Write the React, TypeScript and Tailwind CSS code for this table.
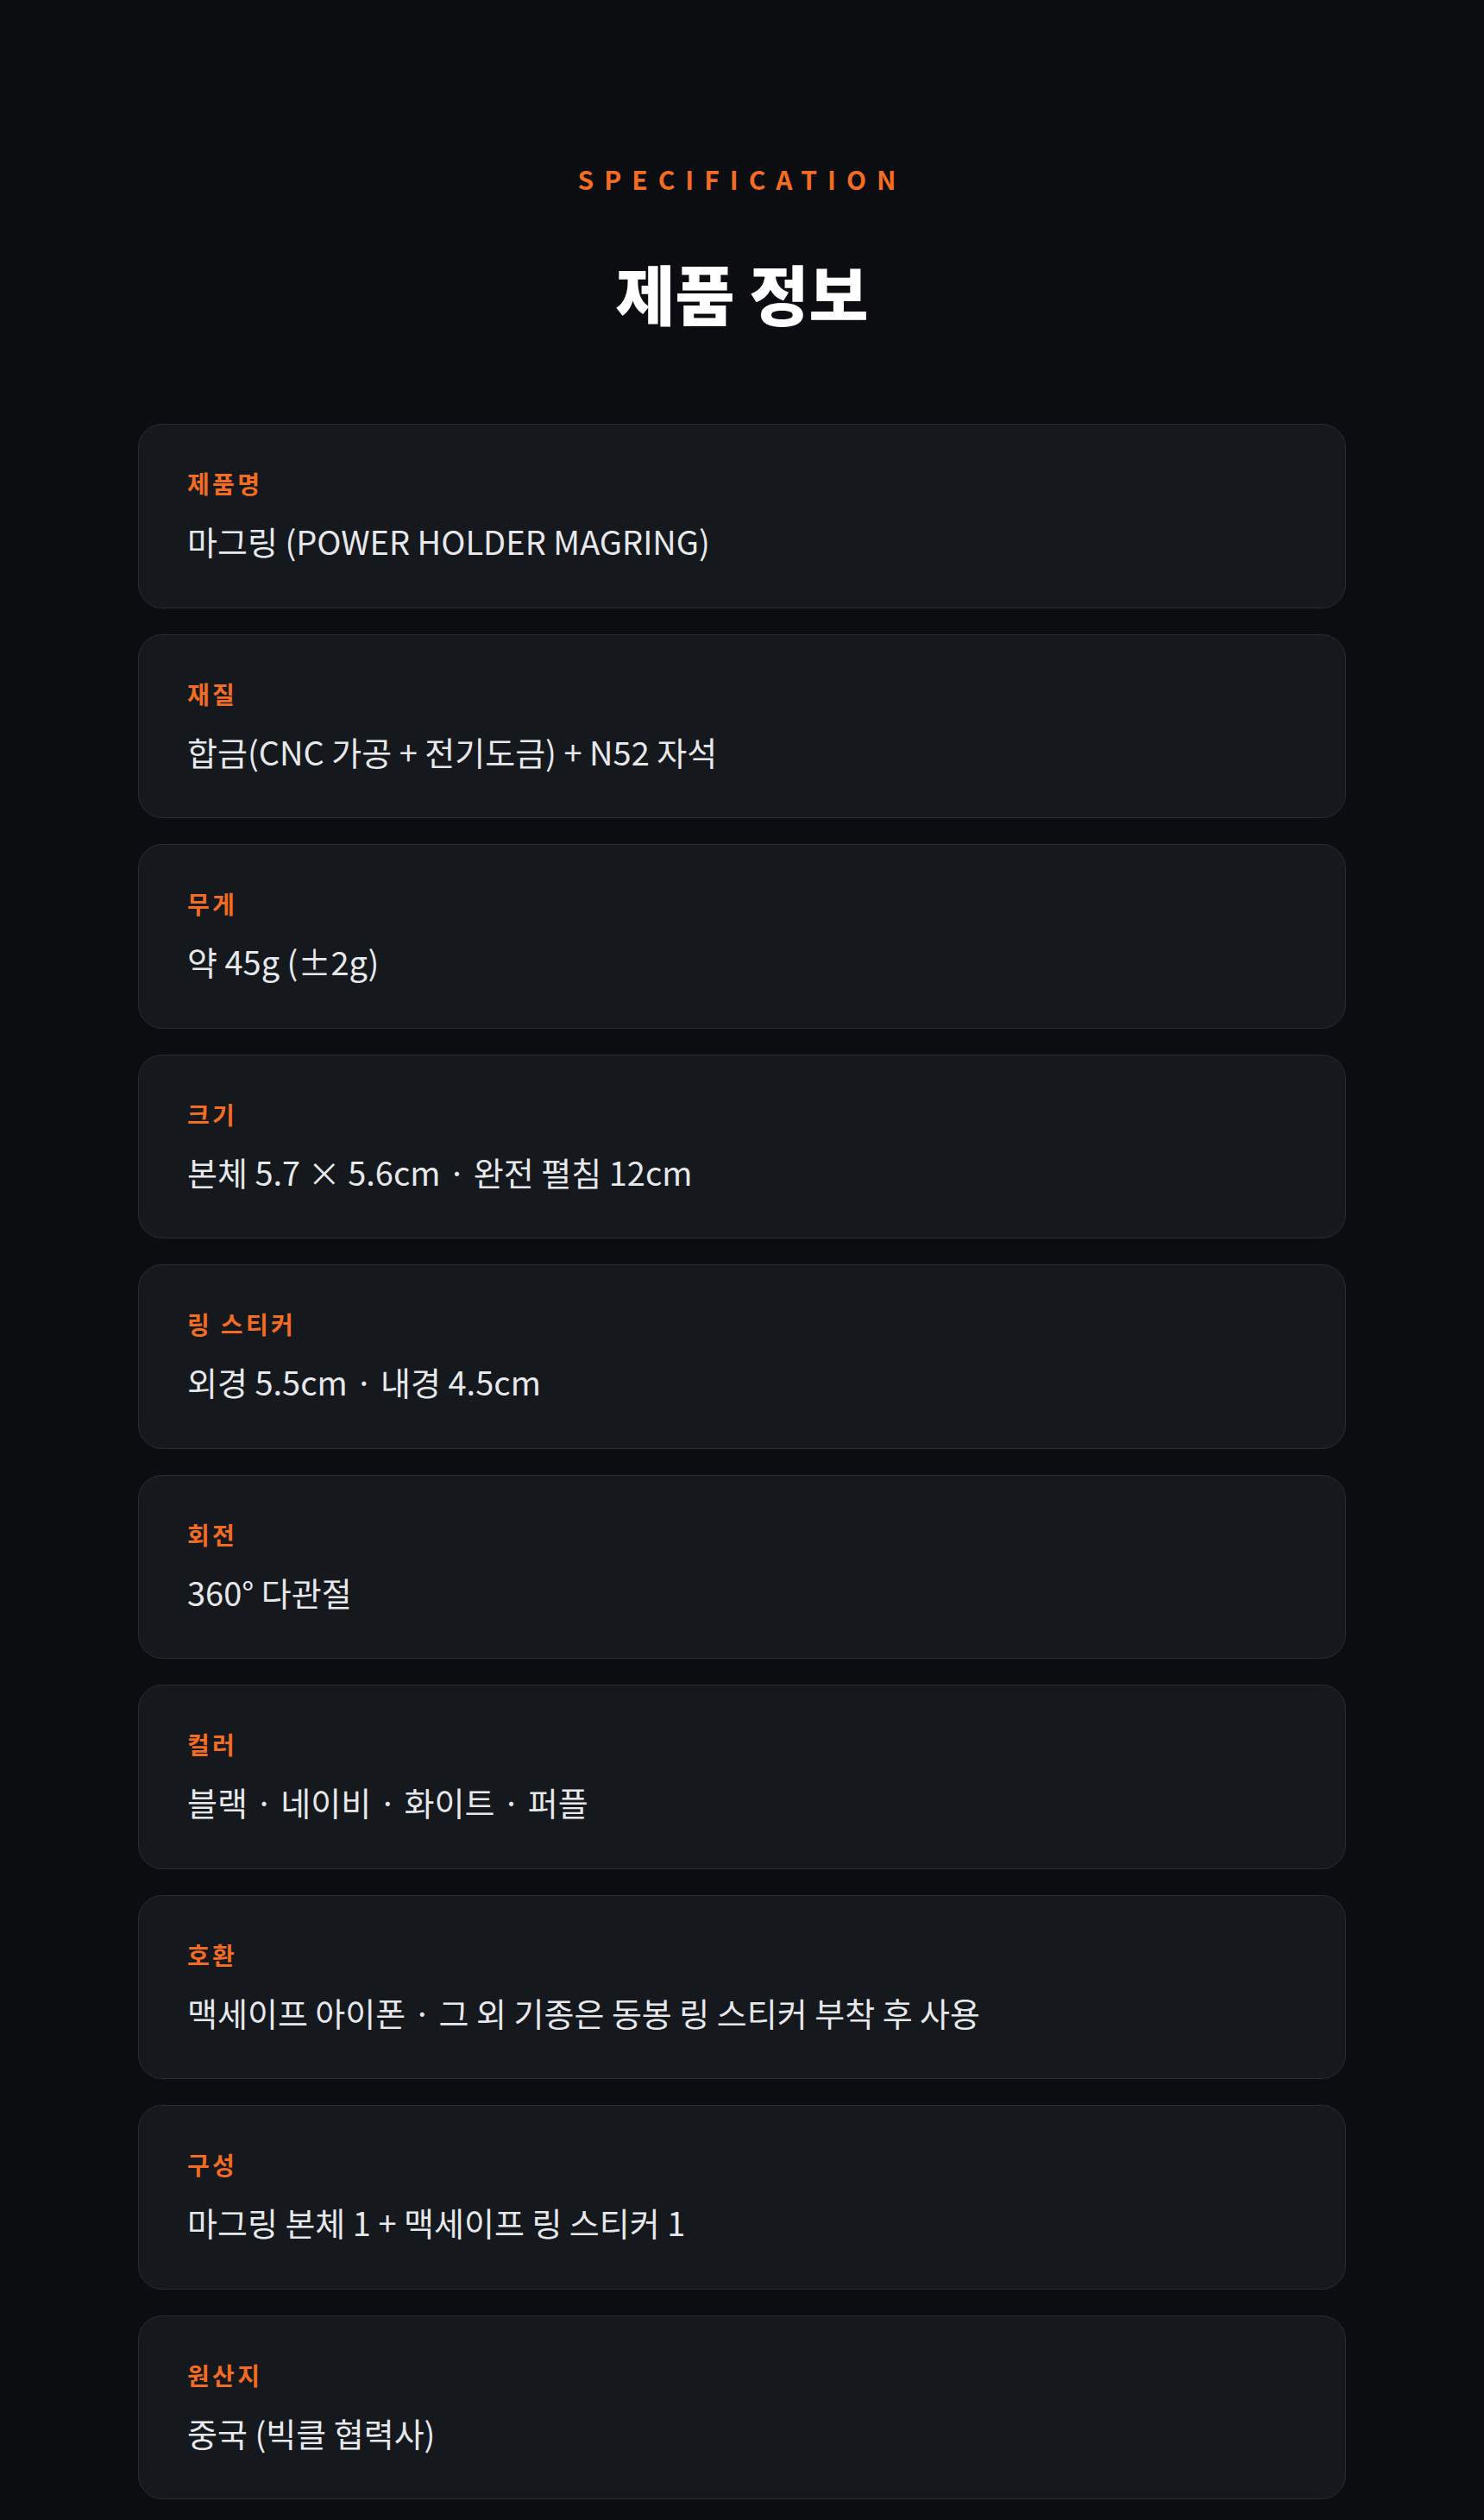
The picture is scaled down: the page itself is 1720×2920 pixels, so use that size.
import React from "react";

const specs: [string, string][] = [
  ["제품명", "마그링 (POWER HOLDER MAGRING)"],
  ["재질", "합금(CNC 가공 + 전기도금) + N52 자석"],
  ["무게", "약 45g (±2g)"],
  ["크기", "본체 5.7 × 5.6cm · 완전 펼침 12cm"],
  ["링 스티커", "외경 5.5cm · 내경 4.5cm"],
  ["회전", "360° 다관절"],
  ["컬러", "블랙 · 네이비 · 화이트 · 퍼플"],
  ["호환", "맥세이프 아이폰 · 그 외 기종은 동봉 링 스티커 부착 후 사용"],
  ["구성", "마그링 본체 1 + 맥세이프 링 스티커 1"],
  ["원산지", "중국 (빅클 협력사)"],
];

export default function App() {
  return (
    <div
      className="min-h-screen bg-[#0b0d10] pt-[187px] pb-[30px]"
      style={{ fontFamily: '"Noto Sans CJK KR", "Noto Sans", sans-serif' }}
    >
      <div className="mx-auto max-w-[1400px]">
        <div className="text-center">
          <p className="text-[30px] leading-[40px] font-semibold tracking-[0.4em] text-[#f26c22]">
            SPECIFICATION
          </p>
          <h2 className="mt-[62px] text-[75px] leading-[100px] font-black text-white">제품 정보</h2>
        </div>
        <div className="mt-[102px] flex flex-col gap-[30px]">
          {specs.map(([k, v]) => (
            <div
              key={k}
              className="rounded-[28px] border border-[#292d35] bg-[#15181d] pl-[56px] pr-[40px] pt-[47px] pb-[48.5px]"
            >
              <p className="text-[28px] leading-[42px] font-bold tracking-[0.12em] text-[#f26c22]">{k}</p>
              <p className="mt-[17px] text-[38px] leading-[57px] font-normal text-[#e6e8eb]">{v}</p>
            </div>
          ))}
        </div>
      </div>
    </div>
  );
}
